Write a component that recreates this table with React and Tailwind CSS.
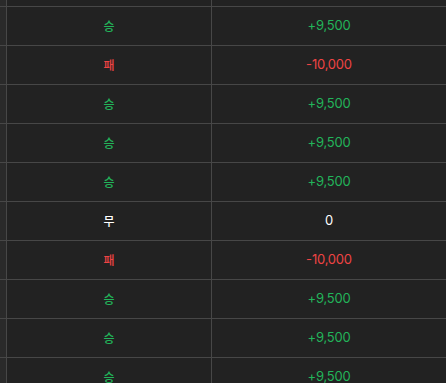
const rows = [
    { result: "", amount: "" },
    { result: "승", amount: "+9,500" },
    { result: "패", amount: "-10,000" },
    { result: "승", amount: "+9,500" },
    { result: "승", amount: "+9,500" },
    { result: "승", amount: "+9,500" },
    { result: "무", amount: "0" },
    { result: "패", amount: "-10,000" },
    { result: "승", amount: "+9,500" },
    { result: "승", amount: "+9,500" },
    { result: "승", amount: "+9,500" },
];

const tone = {
    승: "text-[#22b45a]",
    패: "text-[#ef4444]",
    무: "text-white",
    "": "text-white",
};

const App = () => {
    return (
        <div className="w-[446px] h-[383px] overflow-hidden bg-[#222222] font-['Inter','Noto_Sans_CJK_KR',sans-serif]">
            <div className="-mt-[32px]">
                {rows.map((row, i) => (
                    <div key={i} className="flex h-[39px] border-b border-[#474747]">
                        <div className="w-[7px] shrink-0 bg-[#2a2a2a] border-r border-[#474747]" />
                        <div
                            className={`w-[205px] shrink-0 flex items-center justify-center border-r border-[#474747] text-[12px] font-medium font-['Noto_Sans_CJK_KR',sans-serif] ${tone[row.result]}`}
                        >
                            {row.result}
                        </div>
                        <div className={`flex-1 flex items-center justify-center text-[13px] tracking-[-0.2px] ${tone[row.result]}`}>
                            {row.amount}
                        </div>
                    </div>
                ))}
            </div>
        </div>
    );
};

export default App;
